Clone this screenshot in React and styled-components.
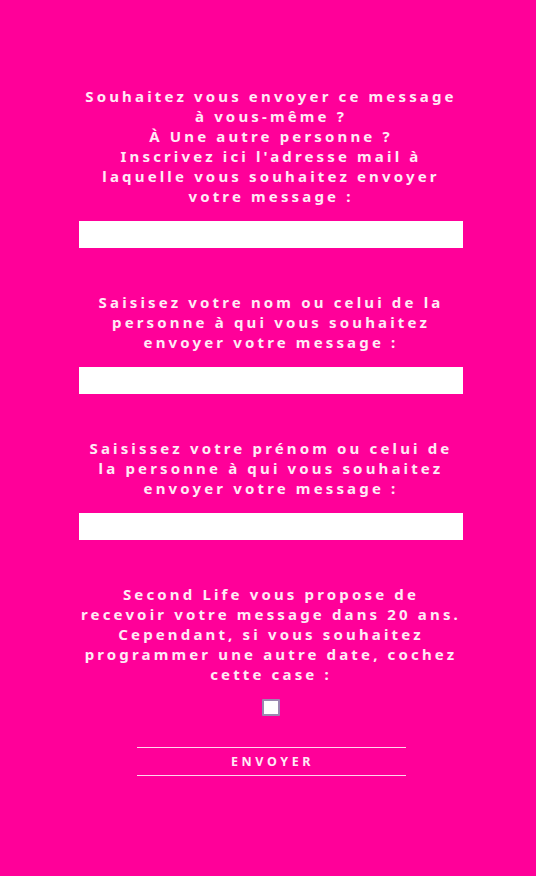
import React, { useState } from 'react';
import styled, { createGlobalStyle } from 'styled-components';

const GlobalStyle = createGlobalStyle`
  html, body {
    margin: 0;
    padding: 0;
    background-color: #ff0099;
  }
`;

const Page = styled.div`
  min-height: 876px;
  background-color: #ff0099;
  display: flex;
  justify-content: center;
  padding: 86px 0 0 6px;
  box-sizing: border-box;
  font-family: 'Noto Sans', 'Lato', sans-serif;
`;

const FormStyle = styled.form`
  width: 384px;
  display: flex;
  flex-direction: column;
  align-items: center;
`;

const Field = styled.div`
  width: 100%;
  display: flex;
  flex-direction: column;
  align-items: center;
  margin-bottom: ${(p) => p.$gap ?? 44}px;
`;

const Label = styled.label`
  color: #ffeaf6;
  font-size: 15px;
  font-weight: 700;
  line-height: 20px;
  letter-spacing: 3.15px;
  text-align: center;
  margin-bottom: 15px;
`;

const Input = styled.input`
  width: 100%;
  height: 27px;
  box-sizing: border-box;
  border: none;
  outline: none;
  background: #ffffff;
  padding: 0 8px;
  font-size: 14px;
`;

const Check = styled.span`
  display: block;
  width: 18px;
  height: 17px;
  box-sizing: border-box;
  background: #ffffff;
  border: 2px solid #9a88b0;
  border-radius: 1px;
`;

const Submit = styled.button`
  width: 269px;
  height: 29px;
  margin-top: 31px;
  background: transparent;
  border: none;
  border-top: 1px solid #ffd6ee;
  border-bottom: 1px solid #ffd6ee;
  color: #ffeaf6;
  font-family: 'Noto Sans', 'Lato', sans-serif;
  font-size: 12.5px;
  font-weight: 700;
  letter-spacing: 3.6px;
  padding: 0 0 0 3px;
  cursor: pointer;
`;

export default function App() {
  const [email, setEmail] = useState('');
  const [nom, setNom] = useState('');
  const [prenom, setPrenom] = useState('');

  return (
    <Page>
      <GlobalStyle />
      <FormStyle onSubmit={(e) => e.preventDefault()}>
        <Field>
          <Label htmlFor="email">
            Souhaitez vous envoyer ce message
            <br />à vous-même ?
            <br />À Une autre personne ?
            <br />Inscrivez ici l'adresse mail à laquelle vous souhaitez envoyer votre message :
          </Label>
          <Input id="email" value={email} onChange={(e) => setEmail(e.target.value)} />
        </Field>
        <Field>
          <Label htmlFor="nom">
            Saisisez votre nom ou celui de la personne à qui vous souhaitez envoyer votre message :
          </Label>
          <Input id="nom" value={nom} onChange={(e) => setNom(e.target.value)} />
        </Field>
        <Field>
          <Label htmlFor="prenom">
            Saisissez votre prénom ou celui de la personne à qui vous souhaitez envoyer votre message :
          </Label>
          <Input id="prenom" value={prenom} onChange={(e) => setPrenom(e.target.value)} />
        </Field>
        <Field $gap={0}>
          <Label>
            Second Life vous propose de recevoir votre message dans 20 ans. Cependant, si vous souhaitez programmer une autre date, cochez cette case :
          </Label>
          <Check />
        </Field>
        <Submit type="submit">ENVOYER</Submit>
      </FormStyle>
    </Page>
  );
}
